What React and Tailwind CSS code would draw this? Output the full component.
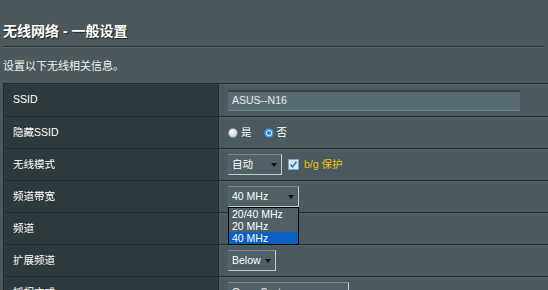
import React from 'react';

const font = "font-['Liberation_Sans','Noto_Sans_CJK_SC',sans-serif]";

const Arrow = () => (
  <svg width="6" height="4" viewBox="0 0 6 4" className="shrink-0">
    <path d="M0 0H6L3 4Z" fill="#111" />
  </svg>
);

const Select = ({ text, width, children }) => (
  <div className="relative">
    <div
      className="flex h-[21px] items-center justify-between border-t border-l border-r border-b border-t-[#7a898e] border-l-[#59686d] border-r-[#c3ccce] border-b-[#c3ccce] bg-[#4f6066] pl-[3px] pr-[4px] text-[10.5px] text-white"
      style={{ width }}
    >
      <span>{text}</span>
      <Arrow />
    </div>
    {children}
  </div>
);

const Radio = ({ checked }) =>
  checked ? (
    <svg width="10" height="10" viewBox="0 0 10 10">
      <circle cx="5" cy="5" r="4.6" fill="#3b9ae4" />
      <circle cx="5" cy="5" r="3" fill="#d8ecfb" />
      <circle cx="5" cy="5" r="2.1" fill="#2c7fcf" />
    </svg>
  ) : (
    <svg width="10" height="10" viewBox="0 0 10 10">
      <defs>
        <radialGradient id="rg" cx="40%" cy="35%" r="70%">
          <stop offset="0" stopColor="#ffffff" />
          <stop offset="1" stopColor="#bfc4c6" />
        </radialGradient>
      </defs>
      <circle cx="5" cy="5" r="4.5" fill="url(#rg)" stroke="#8a9497" strokeWidth="0.6" />
    </svg>
  );

const Checkbox = () => (
  <svg width="11" height="11" viewBox="0 0 11 11">
    <rect x="0.5" y="0.5" width="10" height="10" fill="#d5e8f5" stroke="#7fa6c0" />
    <path d="M2.6 5.6L4.5 7.8L8.4 2.8" fill="none" stroke="#2a78c8" strokeWidth="1.6" />
  </svg>
);

const Row = ({ label, first, children }) => (
  <div className={`flex border-b border-[#232c30] ${first ? 'h-[33px]' : 'h-[32px]'}`}>
    <div className="flex w-[215px] shrink-0 items-center border-r border-[#263034] bg-[#2e393d] pl-[9px] text-[10.5px] text-white">
      {label}
    </div>
    <div className="flex flex-1 items-center gap-[6px] bg-[#4a5a5f] pl-[9px] shadow-[inset_0_1px_0_#52636a]">
      {children}
    </div>
  </div>
);

export default function App() {
  return (
    <div className={`h-[290px] w-[548px] overflow-hidden bg-[#4d585c] ${font}`}>
      <div className="px-[3px] pt-[23px]">
        <div className="h-[16px] text-[14px] font-bold leading-[16px] text-white [text-shadow:1px_1px_1px_#222]">
          无线网络 - 一般设置
        </div>
      </div>
      <div className="mt-[7px] h-[2px] border-t border-b border-t-[#2b3437] border-b-[#5a6569] mx-[3px]" />
      <div className="mt-[12px] h-[12px] px-[3px] text-[11px] leading-[12px] text-[#ecf0f1]">
        设置以下无线相关信息。
      </div>
      <div className="ml-[3px] mt-[11px] border-t border-l border-[#232c30]">
        <Row label="SSID" first>
          <div className="flex h-[21px] w-[292px] items-center border-t-2 border-b border-t-[#35444a] border-b-[#75878c] bg-[#596c72] pl-[4px] text-[10.5px] text-[#e6eef0]">
            ASUS--N16
          </div>
        </Row>
        <Row label="隐藏SSID">
          <div className="flex items-center gap-[3px] text-[10.5px] text-white">
            <Radio />
            <span>是</span>
            <span className="w-[6px]" />
            <Radio checked />
            <span>否</span>
          </div>
        </Row>
        <Row label="无线模式">
          <Select text="自动" width="54px" />
          <div className="flex items-center gap-[5px]">
            <Checkbox />
            <span className="text-[10.5px] text-[#f5c400]">b/g 保护</span>
          </div>
        </Row>
        <Row label="频道带宽">
          <Select text="40 MHz" width="71px">
            <div className="absolute left-0 top-[21px] z-10 w-[71px] border border-black bg-[#4f6066] text-[10.5px] leading-[12px] text-white">
              <div className="h-[12px] pl-[3px]">20/40 MHz</div>
              <div className="h-[12px] pl-[3px]">20 MHz</div>
              <div className="h-[12px] bg-[#0b60c2] pl-[3px]">40 MHz</div>
            </div>
          </Select>
        </Row>
        <Row label="频道" />
        <Row label="扩展频道">
          <Select text="Below" width="48px" />
        </Row>
        <Row label="授权方式">
          <Select text="Open System" width="121px" />
        </Row>
      </div>
    </div>
  );
}
